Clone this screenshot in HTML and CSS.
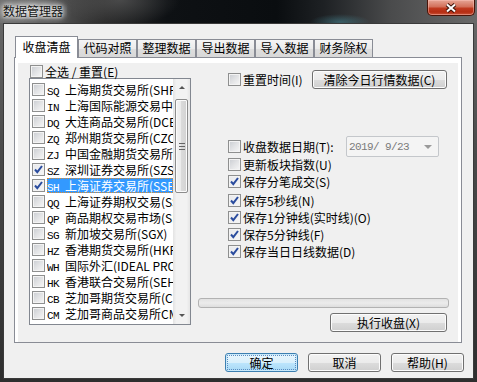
FILE: index.html
```html
<!DOCTYPE html>
<html lang="zh-CN">
<head>
  <meta charset="UTF-8">
  <title>数据管理器</title>
  <link rel="stylesheet" href="styles.css">
</head>
<body>

  <div class="window">
    <!-- Title bar -->
    <div class="titlebar">
      <span class="title">数据管理器</span>
      <button class="close">
        <svg width="16" height="10" viewBox="0 0 16 10">
          <path d="M4 1.5L12 8.5M12 1.5L4 8.5" stroke="#3b1209" stroke-width="4" fill="none"/>
          <path d="M4 1.5L12 8.5M12 1.5L4 8.5" stroke="#fff" stroke-width="2" fill="none"/>
        </svg>
      </button>
    </div>

    <div class="client">
      <!-- Tabs -->
      <div class="tabs">
        <div class="tab active">收盘清盘</div>
        <div class="tab">代码对照</div>
        <div class="tab">整理数据</div>
        <div class="tab">导出数据</div>
        <div class="tab">导入数据</div>
        <div class="tab">财务除权</div>
      </div>

      <div class="panel">
        <div class="page">
          <div class="left">
            <label class="check all"><span class="box"></span>全选 / 重置(E)</label>
            <div class="listbox">
              <ul class="items">
                <li><span class="box"></span><span class="name"><span class="code">SQ</span>上海期货交易所(SHFE)</span></li>
                <li><span class="box"></span><span class="name"><span class="code">IN</span>上海国际能源交易中心(INE)</span></li>
                <li><span class="box"></span><span class="name"><span class="code">DQ</span>大连商品交易所(DCE)</span></li>
                <li><span class="box"></span><span class="name"><span class="code">ZQ</span>郑州期货交易所(CZCE)</span></li>
                <li><span class="box"></span><span class="name"><span class="code">ZJ</span>中国金融期货交易所(CFFEX)</span></li>
                <li><span class="box on"><svg width="11" height="11" viewBox="0 0 11 11"><path d="M2 5.5L4.3 8.2L9 2" stroke="#2a4c9e" stroke-width="2" fill="none"/></svg></span><span class="name"><span class="code">SZ</span>深圳证券交易所(SZSE)</span></li>
                <li class="selected"><span class="box on"><svg width="11" height="11" viewBox="0 0 11 11"><path d="M2 5.5L4.3 8.2L9 2" stroke="#2a4c9e" stroke-width="2" fill="none"/></svg></span><span class="name"><span class="code">SH</span>上海证券交易所(SSE)</span></li>
                <li><span class="box"></span><span class="name"><span class="code">QQ</span>上海证券期权交易(SSEO)</span></li>
                <li><span class="box"></span><span class="name"><span class="code">QP</span>商品期权交易市场(SHFE)</span></li>
                <li><span class="box"></span><span class="name"><span class="code">SG</span>新加坡交易所(SGX)</span></li>
                <li><span class="box"></span><span class="name"><span class="code">HZ</span>香港期货交易所(HKFE)</span></li>
                <li><span class="box"></span><span class="name"><span class="code">WH</span>国际外汇(IDEAL PRO)</span></li>
                <li><span class="box"></span><span class="name"><span class="code">HK</span>香港联合交易所(SEHK)</span></li>
                <li><span class="box"></span><span class="name"><span class="code">CB</span>芝加哥期货交易所(CBOT)</span></li>
                <li><span class="box"></span><span class="name"><span class="code">CM</span>芝加哥商品交易所CME</span></li>
              </ul>
              <div class="scrollbar">
                <div class="arrow up"></div>
                <div class="thumb"><span class="grip"></span></div>
                <div class="track"></div>
                <div class="arrow down"></div>
              </div>
            </div>
          </div>

          <div class="right">
            <div class="row reset">
              <label class="check"><span class="box"></span>重置时间(I)</label>
              <button class="btn clear">清除今日行情数据(C)</button>
            </div>
            <div class="row date-row">
              <label class="check"><span class="box"></span>收盘数据日期(T):</label>
              <div class="date">2019/ 9/23<span class="drop"></span></div>
            </div>
            <label class="check opt first"><span class="box"></span>更新板块指数(U)</label>
            <label class="check opt"><span class="box on"><svg width="11" height="11" viewBox="0 0 11 11"><path d="M2 5.5L4.3 8.2L9 2" stroke="#2a4c9e" stroke-width="2" fill="none"/></svg></span>保存分笔成交(S)</label>
            <label class="check opt gap"><span class="box on"><svg width="11" height="11" viewBox="0 0 11 11"><path d="M2 5.5L4.3 8.2L9 2" stroke="#2a4c9e" stroke-width="2" fill="none"/></svg></span>保存5秒线(N)</label>
            <label class="check opt"><span class="box on"><svg width="11" height="11" viewBox="0 0 11 11"><path d="M2 5.5L4.3 8.2L9 2" stroke="#2a4c9e" stroke-width="2" fill="none"/></svg></span>保存1分钟线(实时线)(O)</label>
            <label class="check opt"><span class="box on"><svg width="11" height="11" viewBox="0 0 11 11"><path d="M2 5.5L4.3 8.2L9 2" stroke="#2a4c9e" stroke-width="2" fill="none"/></svg></span>保存5分钟线(F)</label>
            <label class="check opt"><span class="box on"><svg width="11" height="11" viewBox="0 0 11 11"><path d="M2 5.5L4.3 8.2L9 2" stroke="#2a4c9e" stroke-width="2" fill="none"/></svg></span>保存当日日线数据(D)</label>

            <div class="progress"></div>
            <button class="btn run">执行收盘(X)</button>
          </div>
        </div>
      </div>

      <!-- Dialog buttons -->
      <div class="actions">
        <button class="btn default">确定</button>
        <button class="btn">取消</button>
        <button class="btn">帮助(H)</button>
      </div>
    </div>
  </div>

</body>
</html>
```

FILE: styles.css
```css
body {
  margin: 0;
  padding: 0;
  background: #2a2a2a;
  font-family: "Noto Sans CJK SC", "Liberation Sans", sans-serif;
  font-size: 12px;
  color: #000;
}

/* Window frame */
.window {
  width: 477px;
  height: 382px;
  display: flex;
  flex-direction: column;
  background: linear-gradient(#6c6c6c, #4a4a4a 40%, #2e2e2e);
}

.titlebar {
  height: 23px;
  display: flex;
  align-items: flex-start;
  background:
    radial-gradient(ellipse 60px 26px at 120px 0, rgba(110, 110, 110, 0.5), rgba(0, 0, 0, 0)),
    radial-gradient(ellipse 30px 8px at 340px 22px, rgba(90, 190, 210, 0.35), rgba(0, 0, 0, 0)),
    linear-gradient(to right, #707070 0%, #5a5a5a 10%, #2a2a2a 22%, #0e1114 35%, #0a0d10 58%, #1e2124 68%, #4a4b4c 82%, #6a6a6a 100%);
}

.title {
  padding: 3px 4px 0 3px;
  line-height: 16px;
  font-size: 12px;
  color: #141414;
  text-shadow: 0 0 6px #fff, 0 0 10px #fff, 0 0 3px rgba(255, 255, 255, 0.8);
  background: radial-gradient(ellipse 40px 14px at 32px 11px, rgba(200, 200, 200, 0.55), rgba(200, 200, 200, 0));
}

.close {
  margin-left: auto;
  margin-right: 2px;
  width: 48px;
  height: 16px;
  padding: 0;
  border: 1px solid #4a1408;
  border-top: none;
  border-radius: 0 0 5px 5px;
  background: linear-gradient(#e6a595 0%, #d3705a 45%, #c03a1f 55%, #b52c12 80%, #c9543a 100%);
  box-shadow: inset 0 0 0 1px rgba(255, 200, 190, 0.45);
  display: flex;
  align-items: center;
  justify-content: center;
}

/* Client area */
.client {
  flex: 1;
  margin: 0 3px 3px 3px;
  background: #f0f0f0;
  border: 1px solid #3a3a3a;
  padding: 12px 0 0 10px;
}

.tabs {
  height: 21px;
  display: flex;
  align-items: flex-end;
  padding-left: 1px;
}

.tab {
  width: 59px;
  height: 18px;
  box-sizing: border-box;
  border: 1px solid #898c95;
  border-bottom: none;
  background: linear-gradient(#f5f5f5, #ebebeb 50%, #dedede 50%, #d8d8d8);
  text-align: center;
  line-height: 16px;
}

.tab.active {
  width: 63px;
  height: 22px;
  margin-bottom: -1px;
  padding-top: 2px;
  background: #fff;
  position: relative;
  z-index: 1;
}

.panel {
  width: 448px;
  height: 286px;
  box-sizing: border-box;
  border: 1px solid #898c95;
  background: #fff;
  padding: 5px 3px 0 3px;
}

.page {
  height: 100%;
  background: #f0f0f0;
  display: flex;
}

/* Checkboxes */
.check {
  display: flex;
  align-items: center;
  line-height: 16px;
  white-space: nowrap;
}

.box {
  width: 13px;
  height: 13px;
  box-sizing: border-box;
  flex: none;
  border: 1px solid #8e8f8f;
  background: linear-gradient(135deg, #c9ccd1 0%, #e2e3e5 50%, #f7f7f7 100%);
  box-shadow: inset 0 0 0 1px #f3f3f3;
  margin-right: 2px;
}

.box.on {
  background: linear-gradient(135deg, #e8e9ec 0%, #f5f5f6 100%);
}

.box svg {
  display: block;
}

/* Left column: exchange list */
.left {
  margin-left: 11px;
}

.all {
  height: 13px;
  padding: 2px 0 0 1px;
}

.listbox {
  width: 162px;
  height: 247px;
  box-sizing: border-box;
  border: 1px solid #828790;
  background: #fff;
  display: flex;
}

.items {
  flex: 1;
  min-width: 0;
  list-style: none;
  margin: 0;
  padding: 2px 0 0 2px;
}

.items li {
  height: 16px;
  display: flex;
  align-items: center;
}

.name {
  flex: 1;
  overflow: hidden;
  white-space: nowrap;
  line-height: 15px;
  height: 15px;
}

.code {
  font-family: "Liberation Mono", monospace;
  font-size: 11px;
  letter-spacing: -0.6px;
  display: inline-block;
  width: 18px;
}

.items li.selected .name {
  background: #3399ff;
  color: #fff;
  outline: 1px dotted #e08a2c;
  outline-offset: -1px;
}

.scrollbar {
  width: 17px;
  flex: none;
  display: flex;
  flex-direction: column;
  background: linear-gradient(to right, #e3e3e3, #f2f2f2 20%, #f2f2f2 80%, #e6e6e6);
}

.arrow {
  height: 17px;
  display: flex;
  align-items: center;
  justify-content: center;
}

.arrow::before {
  content: "";
  border-left: 3px solid transparent;
  border-right: 3px solid transparent;
}

.arrow.up::before {
  border-bottom: 3px solid #555;
}

.arrow.down::before {
  border-top: 3px solid #555;
}

.thumb {
  margin: 3px 2px 0 2px;
  height: 94px;
  border: 1px solid #8c8c8c;
  border-radius: 2px;
  box-sizing: border-box;
  background: linear-gradient(to right, #f4f4f4, #e9e9e9 50%, #dadada 50%, #d2d2d2);
  box-shadow: inset 0 0 0 1px #fbfbfb;
  display: flex;
  align-items: center;
  justify-content: center;
}

.grip {
  width: 6px;
  height: 5px;
  border-top: 1px solid #666;
  border-bottom: 1px solid #666;
  background: linear-gradient(transparent 2px, #666 2px, #666 3px, transparent 3px);
}

.track {
  flex: 1;
}

/* Right column: options */
.right {
  margin-left: 7px;
  width: 251px;
  padding-top: 7px;
  display: flex;
  flex-direction: column;
}

.row {
  display: flex;
  align-items: center;
  padding-left: 30px;
}

.reset {
  height: 19px;
}

.clear {
  margin-left: auto;
  margin-right: 2px;
  width: 135px;
}

.date-row {
  margin-top: 47px;
  width: 211px;
}

.date {
  margin-left: auto;
  width: 93px;
  height: 21px;
  box-sizing: border-box;
  border: 1px solid #c4c7cb;
  border-radius: 2px;
  background: #f4f4f4;
  font-family: "Liberation Mono", monospace;
  font-size: 11px;
  letter-spacing: -0.6px;
  color: #7a7a7a;
  display: flex;
  align-items: center;
  padding-left: 2px;
}

.drop {
  margin-left: auto;
  margin-right: 6px;
  border-left: 4px solid transparent;
  border-right: 4px solid transparent;
  border-top: 4px solid #9a9a9a;
}

.opt {
  height: 17px;
  margin-left: 30px;
}

.opt.first {
  margin-top: -1px;
}

.opt.gap {
  margin-top: 2px;
}

.progress {
  margin-top: 38px;
  height: 10px;
  box-sizing: border-box;
  border: 1px solid #b2b2b2;
  border-radius: 3px;
  background: linear-gradient(#e2e2e2, #ececec 50%, #dedede);
}

.run {
  align-self: flex-end;
  margin-top: 5px;
  margin-right: 2px;
  width: 117px;
}

/* Buttons */
.btn {
  height: 19px;
  padding: 0;
  border: 1px solid #707070;
  border-radius: 3px;
  background: linear-gradient(#f2f2f2, #ebebeb 50%, #dddddd 50%, #cfcfcf);
  box-shadow: inset 0 0 0 1px #fcfcfc;
  font-family: "Noto Sans CJK SC", "Liberation Sans", sans-serif;
  font-size: 12px;
  line-height: 15px;
  color: #000;
}

.actions {
  display: flex;
  justify-content: flex-end;
  gap: 10px;
  margin-top: 10px;
  padding-right: 9px;
}

.actions .btn {
  width: 73px;
}

.btn.default {
  border-color: #3c7fb1;
  background: linear-gradient(#eaf6fd, #d9f0fc 50%, #bee6fd 50%, #a7d9f5);
  box-shadow: inset 0 0 0 1px #c8e8fa;
  outline: 1px dotted #5a8cc0;
  outline-offset: -3px;
}
```
